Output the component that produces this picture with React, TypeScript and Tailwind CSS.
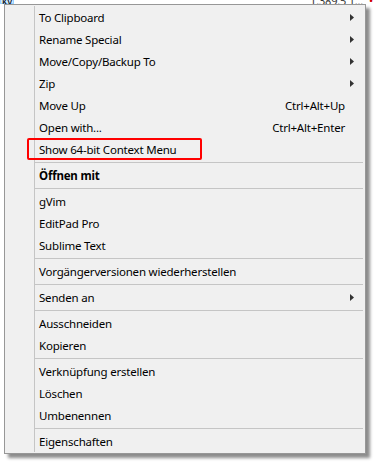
type Item =
  | { kind: "item"; label: string; shortcut?: string; submenu?: boolean; bold?: boolean; marked?: boolean }
  | { kind: "sep" };

const items: Item[] = [
  { kind: "item", label: "To Clipboard", submenu: true },
  { kind: "item", label: "Rename Special", submenu: true },
  { kind: "item", label: "Move/Copy/Backup To", submenu: true },
  { kind: "item", label: "Zip", submenu: true },
  { kind: "item", label: "Move Up", shortcut: "Ctrl+Alt+Up" },
  { kind: "item", label: "Open with...", shortcut: "Ctrl+Alt+Enter" },
  { kind: "item", label: "Show 64-bit Context Menu", marked: true },
  { kind: "sep" },
  { kind: "item", label: "Öffnen mit", bold: true },
  { kind: "sep" },
  { kind: "item", label: "gVim" },
  { kind: "item", label: "EditPad Pro" },
  { kind: "item", label: "Sublime Text" },
  { kind: "sep" },
  { kind: "item", label: "Vorgängerversionen wiederherstellen" },
  { kind: "sep" },
  { kind: "item", label: "Senden an", submenu: true },
  { kind: "sep" },
  { kind: "item", label: "Ausschneiden" },
  { kind: "item", label: "Kopieren" },
  { kind: "sep" },
  { kind: "item", label: "Verknüpfung erstellen" },
  { kind: "item", label: "Löschen" },
  { kind: "item", label: "Umbenennen" },
  { kind: "sep" },
  { kind: "item", label: "Eigenschaften" },
];

function Arrow() {
  return (
    <svg width="4" height="7" viewBox="0 0 4 7" className="shrink-0">
      <path d="M0 0 L4 3.5 L0 7 Z" fill="#333" />
    </svg>
  );
}

export default function App() {
  return (
    <div className="w-[375px] h-[465px] bg-white overflow-hidden font-['Noto_Sans',sans-serif] text-[11.5px] tracking-[-0.2px] text-black">
      {/* window behind the menu, only its bottom edge shows */}
      <div className="h-[4px] flex items-start overflow-hidden">
        <div className="w-[14px] h-[4px] bg-[#cce8ff] border border-t-0 border-[#99d1ff] text-[10px] leading-[2px] pl-[1px]">
          kv
        </div>
        <div className="ml-auto mr-[2px] flex gap-[6px] text-[11px] leading-[2px] text-[#333]">
          <span>1.389.5 1...</span>
          <span className="text-[#d00000]">•</span>
        </div>
      </div>

      <div className="ml-[4px] w-[362px] border border-[#979797] bg-[#f0f0f0] py-[1px] shadow-[4px_4px_3px_rgba(0,0,0,0.45)]">
        <div className="relative">
          <div className="absolute left-[29px] top-0 bottom-0 w-px bg-[#c5c5c5]" />
          {items.map((it, i) =>
            it.kind === "sep" ? (
              <div key={i} className="h-[4px] pl-[30px] pr-[2px] pt-[2px]">
                <div className="h-px bg-[#c5c5c5]" />
              </div>
            ) : (
              <div key={i} className="relative h-[22px] flex items-center pt-[2px] pl-[34px] pr-[11px]">
                {it.marked && (
                  <div className="absolute left-[22px] top-0 w-[175px] h-[22px] border-2 border-[#ff0000] rounded-[2px]" />
                )}
                <span className={it.bold ? "font-bold" : ""}>{it.label}</span>
                {it.shortcut && <span className="ml-auto mr-[9px]">{it.shortcut}</span>}
                {it.submenu && (
                  <span className="ml-auto -mt-[2px]">
                    <Arrow />
                  </span>
                )}
              </div>
            )
          )}
        </div>
      </div>
    </div>
  );
}
